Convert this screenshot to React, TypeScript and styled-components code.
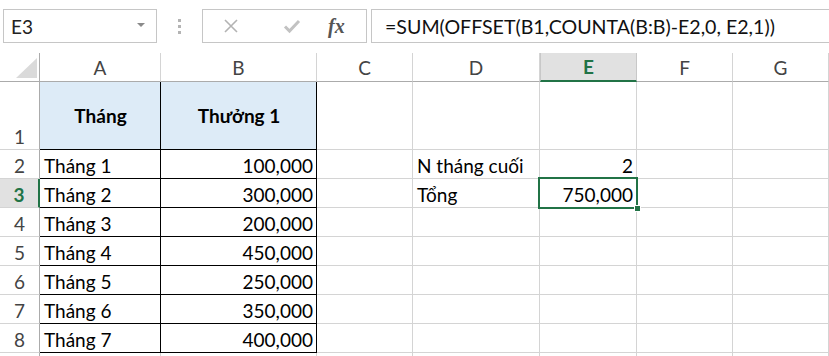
import React from 'react'
import styled, { createGlobalStyle, css } from 'styled-components'

const GlobalStyle = createGlobalStyle`
  html, body {
    margin: 0;
    padding: 0;
    background: #fff;
    overflow: hidden;
  }
  body {
    font-family: Lato, "Noto Sans", sans-serif;
  }
`

const GREEN = '#217346'
const GRID = '#d4d4d4'

const Page = styled.div`
  width: 829px;
  height: 356px;
  overflow: hidden;
  background: #fff;
`

const Toolbar = styled.div`
  display: flex;
  align-items: center;
  height: 53px;
  padding: 9px 0 10px 3px;
  box-sizing: border-box;
`

const NameBox = styled.div`
  width: 154px;
  height: 34px;
  box-sizing: border-box;
  border: 1px solid #c6c6c6;
  display: flex;
  align-items: center;
  justify-content: space-between;
  padding: 0 11px 0 7px;
  font-size: 19px;
  color: #222;
`

const DropArrow = styled.span`
  width: 0;
  height: 0;
  border-left: 4px solid transparent;
  border-right: 4px solid transparent;
  border-top: 4px solid #8a8a8a;
  margin-top: -2px;
`

const Grip = styled.div`
  width: 45px;
  display: flex;
  flex-direction: column;
  align-items: center;
  gap: 3px;

  span {
    width: 3px;
    height: 3px;
    background: #b4b4b4;
  }
`

const FxBox = styled.div`
  width: 165px;
  height: 34px;
  box-sizing: border-box;
  border: 1px solid #c6c6c6;
  display: flex;
  align-items: center;
  padding-left: 20px;
`

const IconSlot = styled.div<{ $w: number }>`
  width: ${(p) => p.$w}px;
  display: flex;
  align-items: center;
`

const FxLabel = styled.span`
  font-family: "Liberation Serif", "DejaVu Serif", serif;
  font-style: italic;
  font-weight: bold;
  font-size: 20px;
  color: #555;
`

const FormulaInput = styled.div`
  flex: 1;
  height: 34px;
  box-sizing: border-box;
  border: 1px solid #c6c6c6;
  border-right: none;
  margin-left: 4px;
  display: flex;
  align-items: center;
  padding-left: 13px;
  font-size: 19.6px;
  color: #111;
  white-space: nowrap;
`

const Sheet = styled.div<{ $cols: number[]; $rows: number[] }>`
  display: grid;
  grid-template-columns: ${(p) => p.$cols.map((c) => c + 'px').join(' ')};
  grid-template-rows: ${(p) => p.$rows.map((r) => r + 'px').join(' ')};
  font-size: 19px;
`

const Corner = styled.div`
  position: relative;
  border-right: 1px solid #ababab;
  border-bottom: 1px solid #ababab;
  box-sizing: border-box;

  &::after {
    content: '';
    position: absolute;
    left: 16px;
    top: 5px;
    width: 21px;
    height: 20px;
    background: #dadada;
    clip-path: polygon(100% 0, 100% 100%, 0 100%);
  }
`

const ColHead = styled.div<{ $active?: boolean }>`
  box-sizing: border-box;
  display: flex;
  align-items: center;
  justify-content: center;
  color: #444;
  border-right: 1px solid ${GRID};
  border-bottom: 1px solid #ababab;
  ${(p) =>
    p.$active &&
    css`
      background: #e1e1e1;
      color: ${GREEN};
      font-weight: bold;
      border-bottom: 2px solid ${GREEN};
      border-right-color: #c8c8c8;
      border-left: 1px solid #c8c8c8;
    `}
`

const RowHead = styled.div<{ $active?: boolean }>`
  box-sizing: border-box;
  display: flex;
  align-items: flex-end;
  justify-content: center;
  padding-bottom: 1px;
  color: #444;
  border-right: 1px solid #ababab;
  border-bottom: 1px solid ${GRID};
  ${(p) =>
    p.$active &&
    css`
      background: #e1e1e1;
      color: ${GREEN};
      font-weight: bold;
      border-right: 2px solid ${GREEN};
    `}
`

const Cell = styled.div<{
  $boxed?: boolean
  $fill?: string
  $align?: 'left' | 'right' | 'center'
  $bold?: boolean
  $middle?: boolean
}>`
  position: relative;
  box-sizing: border-box;
  display: flex;
  align-items: ${(p) => (p.$middle ? 'center' : 'flex-end')};
  justify-content: ${(p) =>
    p.$align === 'right' ? 'flex-end' : p.$align === 'center' ? 'center' : 'flex-start'};
  padding: 0 3px 1px 4px;
  white-space: nowrap;
  color: #000;
  font-weight: ${(p) => (p.$bold ? 'bold' : 'normal')};
  background: ${(p) => p.$fill || 'transparent'};
  border-right: 1px solid ${(p) => (p.$boxed ? '#000' : GRID)};
  border-bottom: 1px solid ${(p) => (p.$boxed ? '#000' : GRID)};
`

const Selection = styled.div`
  position: absolute;
  left: -2px;
  top: -2px;
  right: -2px;
  bottom: -2px;
  border: 2px solid ${GREEN};
  pointer-events: none;
  z-index: 2;

  &::after {
    content: '';
    position: absolute;
    right: -5px;
    bottom: -5px;
    width: 5px;
    height: 5px;
    background: ${GREEN};
    border: 1px solid #fff;
  }
`

const CloseIcon = () => (
  <svg width="16" height="16" viewBox="0 0 16 16">
    <path d="M2 2 L14 14 M14 2 L2 14" stroke="#b3b3b3" strokeWidth="1.6" fill="none" />
  </svg>
)

const CheckIcon = () => (
  <svg width="18" height="16" viewBox="0 0 18 16">
    <path d="M2 8.5 L6.5 13 L16 3" stroke="#c2c2c2" strokeWidth="3" fill="none" />
  </svg>
)

const columns = ['A', 'B', 'C', 'D', 'E', 'F', 'G']
const colWidths = [40, 121, 156, 96, 127, 97, 96, 96]
const rowHeights = [29, 68, 29, 29, 29, 29, 29, 29, 29, 29]

type Row = { A?: string; B?: string; D?: string; E?: string }

const rows: Row[] = [
  { A: 'Tháng', B: 'Thưởng 1' },
  { A: 'Tháng 1', B: '100,000', D: 'N tháng cuối', E: '2' },
  { A: 'Tháng 2', B: '300,000', D: 'Tổng', E: '750,000' },
  { A: 'Tháng 3', B: '200,000' },
  { A: 'Tháng 4', B: '450,000' },
  { A: 'Tháng 5', B: '250,000' },
  { A: 'Tháng 6', B: '350,000' },
  { A: 'Tháng 7', B: '400,000' },
  {},
]

export default function App() {
  return (
    <Page>
      <GlobalStyle />
      <Toolbar>
        <NameBox>
          E3
          <DropArrow />
        </NameBox>
        <Grip>
          <span />
          <span />
          <span />
        </Grip>
        <FxBox>
          <IconSlot $w={60}>
            <CloseIcon />
          </IconSlot>
          <IconSlot $w={45}>
            <CheckIcon />
          </IconSlot>
          <FxLabel>fx</FxLabel>
        </FxBox>
        <FormulaInput>=SUM(OFFSET(B1,COUNTA(B:B)-E2,0, E2,1))</FormulaInput>
      </Toolbar>

      <Sheet $cols={colWidths} $rows={rowHeights}>
        <Corner />
        {columns.map((c) => (
          <ColHead key={c} $active={c === 'E'}>
            {c}
          </ColHead>
        ))}

        {rows.map((r, i) => {
          const n = i + 1
          const header = n === 1
          const inTable = n <= 8
          return (
            <React.Fragment key={n}>
              {/* row 9 only peeks in at the bottom edge, its number is below the fold */}
              <RowHead $active={n === 3}>{n <= 8 ? n : null}</RowHead>
              {columns.map((c) => {
                const value = (r as Record<string, string | undefined>)[c]
                const boxed = inTable && (c === 'A' || c === 'B')
                const numeric = c === 'B' || c === 'E'
                return (
                  <Cell
                    key={c}
                    $boxed={boxed}
                    $fill={header && boxed ? '#ddebf7' : undefined}
                    $bold={header && boxed}
                    $middle={header}
                    $align={header ? 'center' : numeric ? 'right' : 'left'}
                  >
                    {value}
                    {n === 3 && c === 'E' && <Selection />}
                  </Cell>
                )
              })}
            </React.Fragment>
          )
        })}
      </Sheet>
    </Page>
  )
}
